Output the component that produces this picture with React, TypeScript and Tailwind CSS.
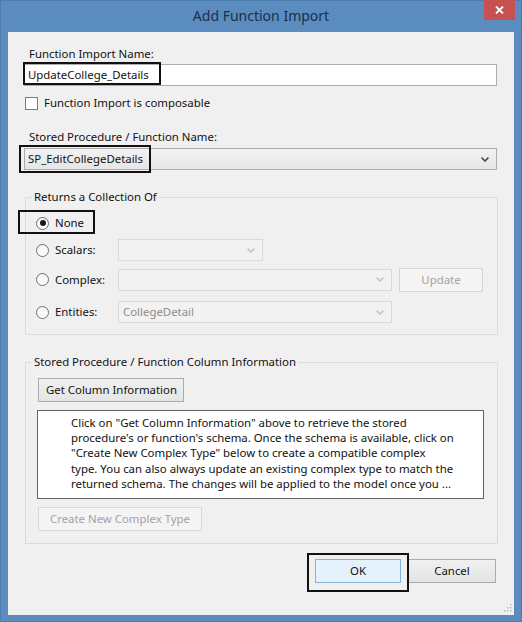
import React from "react";

function Chevron({ color }: { color: string }) {
  return (
    <svg width="8" height="5" viewBox="0 0 8 5" className="shrink-0">
      <path d="M0.6 0.6 L4 4 L7.4 0.6" fill="none" stroke={color} strokeWidth="1.6" />
    </svg>
  );
}

function Radio({ checked }: { checked?: boolean }) {
  return (
    <span className="w-[13px] h-[13px] rounded-full border border-[#6f6f6f] bg-gradient-to-b from-[#f4f4f4] to-[#ffffff] flex items-center justify-center shrink-0">
      {checked ? <span className="w-[6px] h-[6px] rounded-full bg-[#1a1a1a]" /> : null}
    </span>
  );
}

function DisabledCombo({ width, text }: { width: string; text?: string }) {
  return (
    <div
      className={`${width} h-[22px] border border-[#d9d9d9] bg-[#f2f2f2] flex items-center justify-between pl-[4px] pr-[7px] text-[#8d8d8d]`}
    >
      <span>{text ?? ""}</span>
      <Chevron color="#c4c4c4" />
    </div>
  );
}

export default function App() {
  return (
    <div className="relative w-[522px] h-[622px] bg-[#5b8cc0] shadow-[inset_0_0_0_1px_#4c7cae] font-['Noto_Sans',sans-serif] text-[11.4px] leading-[16px] text-[#111] overflow-hidden flex flex-col">
      {/* Title bar */}
      <div className="h-[32px] shrink-0 flex items-center justify-center text-[14px] text-[#1c2f48]">
        Add Function Import
      </div>
      <div className="absolute top-0 left-[484px] w-[31px] h-[20px] bg-[#c75050] flex items-center justify-center">
        <svg width="9" height="8" viewBox="0 0 9 8">
          <path d="M1 0.5 L8 7.5 M8 0.5 L1 7.5" stroke="#ffffff" strokeWidth="1.8" />
        </svg>
      </div>

      {/* Client area */}
      <div className="relative mx-[8px] h-[583px] shrink-0 bg-[#f0f0f0] pt-[14px]">
        <div className="pl-[21px] h-[16px]">Function Import Name:</div>
        <div className="mt-[2px] ml-[16px] w-[473px] h-[22px] border border-[#abadb3] bg-white pl-[3px] flex items-center">
          UpdateCollege_Details
        </div>

        <div className="mt-[9px] ml-[17px] h-[16px] flex items-center gap-[6px]">
          <span className="w-[13px] h-[13px] border border-[#7a7a7a] bg-white shrink-0" />
          <span>Function Import is composable</span>
        </div>

        <div className="mt-[18px] pl-[21px] h-[16px]">Stored Procedure / Function Name:</div>
        <div className="mt-[3px] ml-[16px] w-[473px] h-[22px] border border-[#acacac] bg-gradient-to-b from-[#f2f2f2] to-[#e6e6e6] pl-[3px] pr-[7px] flex items-center justify-between">
          <span>SP_EditCollegeDetails</span>
          <Chevron color="#4a4a4a" />
        </div>

        {/* Returns a Collection Of */}
        <fieldset className="mt-[19px] ml-[17px] w-[473px] border border-[#dcdcdc] pb-[11px]">
          <legend className="ml-[6px] px-[2px] leading-[16px]">Returns a Collection Of</legend>
          <div className="mt-[7px] h-[22px] pl-[10px] flex items-center">
            <div className="w-[82px] flex items-center gap-[6px]">
              <Radio checked />
              <span>None</span>
            </div>
          </div>
          <div className="mt-[5px] h-[22px] pl-[10px] flex items-center">
            <div className="w-[82px] flex items-center gap-[6px]">
              <Radio />
              <span>Scalars:</span>
            </div>
            <DisabledCombo width="w-[145px]" />
          </div>
          <div className="mt-[7px] h-[23px] pl-[10px] flex items-center">
            <div className="w-[82px] flex items-center gap-[6px]">
              <Radio />
              <span>Complex:</span>
            </div>
            <DisabledCombo width="w-[274px]" />
            <div className="ml-[7px] w-[84px] h-[24px] border border-[#d5d5d5] bg-[#f4f4f4] text-[#a3a3a3] flex items-center justify-center">
              Update
            </div>
          </div>
          <div className="mt-[10px] h-[22px] pl-[10px] flex items-center">
            <div className="w-[82px] flex items-center gap-[6px]">
              <Radio />
              <span>Entities:</span>
            </div>
            <DisabledCombo width="w-[274px]" text="CollegeDetail" />
          </div>
        </fieldset>

        {/* Column information */}
        <fieldset className="mt-[19px] ml-[17px] w-[473px] border border-[#dcdcdc] pb-[12px]">
          <legend className="ml-[6px] px-[2px] leading-[16px]">
            Stored Procedure / Function Column Information
          </legend>
          <div className="mt-[8px] ml-[12px] w-[146px] h-[24px] border border-[#acacac] bg-gradient-to-b from-[#f0f0f0] to-[#e5e5e5] flex items-center pl-[7px] whitespace-nowrap">
            Get Column Information
          </div>
          <div className="mt-[8px] ml-[11px] w-[447px] h-[89px] border border-[#646464] bg-white pl-[33px] pt-[4px] leading-[15.2px] whitespace-nowrap overflow-hidden">
            <div>Click on "Get Column Information" above to retrieve the stored</div>
            <div>procedure's or function's schema. Once the schema is available, click on</div>
            <div>"Create New Complex Type" below to create a compatible complex</div>
            <div>type. You can also always update an existing complex type to match the</div>
            <div>returned schema. The changes will be applied to the model once you ...</div>
          </div>
          <div className="mt-[8px] ml-[12px] w-[164px] h-[24px] border border-[#d9d9d9] bg-[#f4f4f4] text-[#a3a3a3] flex items-center justify-center whitespace-nowrap">
            Create New Complex Type
          </div>
        </fieldset>

        <div className="mt-[15px] pr-[18px] flex justify-end gap-[7px]">
          <div className="w-[86px] h-[24px] border border-[#86b4e0] bg-[#e5f1fb] flex items-center justify-center">
            OK
          </div>
          <div className="w-[88px] h-[24px] border border-[#acacac] bg-gradient-to-b from-[#f0f0f0] to-[#e5e5e5] flex items-center justify-center">
            Cancel
          </div>
        </div>

        {/* resize grip */}
        <svg className="absolute right-[2px] bottom-[3px]" width="9" height="9" viewBox="0 0 9 9">
          <rect x="7" y="1" width="1.5" height="1.5" fill="#b8b8b8" />
          <rect x="4" y="4" width="1.5" height="1.5" fill="#b8b8b8" />
          <rect x="7" y="4" width="1.5" height="1.5" fill="#b8b8b8" />
          <rect x="1" y="7" width="1.5" height="1.5" fill="#b8b8b8" />
          <rect x="4" y="7" width="1.5" height="1.5" fill="#b8b8b8" />
          <rect x="7" y="7" width="1.5" height="1.5" fill="#b8b8b8" />
        </svg>
      </div>

      {/* annotation highlight boxes */}
      <div className="absolute pointer-events-none left-[23px] top-[62px] w-[138px] h-[23px] border-2 border-[#111]" />
      <div className="absolute pointer-events-none left-[19px] top-[145px] w-[132px] h-[28px] border-2 border-[#111]" />
      <div className="absolute pointer-events-none left-[18px] top-[210px] w-[77px] h-[24px] border-2 border-[#111]" />
      <div className="absolute pointer-events-none left-[307px] top-[553px] w-[102px] h-[39px] border-2 border-[#111]" />
    </div>
  );
}
